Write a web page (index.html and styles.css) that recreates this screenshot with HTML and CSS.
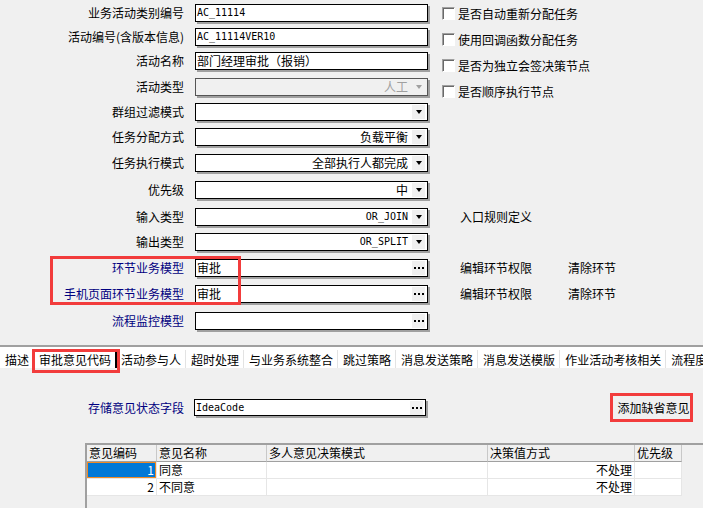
FILE: index.html
```html
<!DOCTYPE html>
<html lang="zh-CN">
<head>
    <meta charset="UTF-8">
    <title>活动属性</title>
    <link rel="stylesheet" href="styles.css">
</head>
<body>
    <!-- activity properties -->
    <div class="top">
        <div class="form">
            <div class="opts">
                <div class="chk"><span class="box"></span>是否自动重新分配任务</div>
                <div class="chk"><span class="box"></span>使用回调函数分配任务</div>
                <div class="chk"><span class="box"></span>是否为独立会签决策节点</div>
                <div class="chk"><span class="box"></span>是否顺序执行节点</div>
            </div>

            <div class="lbl">业务活动类别编号</div>
            <div class="fld mono">AC_11114</div>

            <div class="lbl">活动编号(含版本信息)</div>
            <div class="fld mono">AC_11114VER10</div>

            <div class="lbl">活动名称</div>
            <div class="fld">部门经理审批（报销）</div>

            <div class="lbl">活动类型</div>
            <div class="fld sel off"><span>人工</span><span class="dd"></span></div>

            <div class="lbl">群组过滤模式</div>
            <div class="fld sel"><span></span><span class="dd"></span></div>

            <div class="lbl">任务分配方式</div>
            <div class="fld sel"><span>负载平衡</span><span class="dd"></span></div>

            <div class="lbl">任务执行模式</div>
            <div class="fld sel"><span>全部执行人都完成</span><span class="dd"></span></div>

            <div class="lbl">优先级</div>
            <div class="fld sel"><span>中</span><span class="dd"></span></div>

            <div class="lbl">输入类型</div>
            <div class="fld sel"><span class="mono">OR_JOIN</span><span class="dd"></span></div>
            <div class="note">入口规则定义</div>

            <div class="lbl">输出类型</div>
            <div class="fld sel"><span class="mono">OR_SPLIT</span><span class="dd"></span></div>

            <div class="lbl link">环节业务模型</div>
            <div class="fld pick"><span>审批</span><span class="dots"></span></div>
            <div class="note"><span class="act">编辑环节权限</span><span>清除环节</span></div>

            <div class="lbl link">手机页面环节业务模型</div>
            <div class="fld pick"><span>审批</span><span class="dots"></span></div>
            <div class="note"><span class="act">编辑环节权限</span><span>清除环节</span></div>

            <div class="lbl link">流程监控模型</div>
            <div class="fld pick"><span></span><span class="dots"></span></div>
        </div>
        <div class="mark mark-model"></div>
    </div>

    <div class="tabbar">
        <div class="tabs">
            <span class="tab">描述</span>
            <span class="tab on">审批意见代码</span>
            <span class="tab">活动参与人</span>
            <span class="tab">超时处理</span>
            <span class="tab">与业务系统整合</span>
            <span class="tab">跳过策略</span>
            <span class="tab">消息发送策略</span>
            <span class="tab">消息发送模版</span>
            <span class="tab">作业活动考核相关</span>
            <span class="tab">流程度量</span>
        </div>
        <div class="mark mark-tab"></div>
    </div>

    <!-- approval opinion codes -->
    <div class="pane">
        <div class="pane-row">
            <div class="lbl link wide">存储意见状态字段</div>
            <div class="fld pick code"><span class="mono">IdeaCode</span><span class="dots"></span></div>
            <div class="btn">添加缺省意见</div>
        </div>

        <div class="grid">
            <div class="gr head">
                <div>意见编码</div>
                <div>意见名称</div>
                <div>多人意见决策模式</div>
                <div>决策值方式</div>
                <div>优先级</div>
            </div>
            <div class="gr">
                <div class="num cur">1</div>
                <div>同意</div>
                <div></div>
                <div class="num">不处理</div>
                <div></div>
            </div>
            <div class="gr">
                <div class="num">2</div>
                <div>不同意</div>
                <div></div>
                <div class="num">不处理</div>
                <div></div>
            </div>
        </div>
    </div>
</body>
</html>
```

FILE: styles.css
```css
body {
    margin: 0;
    width: 703px;
    height: 508px;
    overflow: hidden;
    background-color: #f0f0f0;
    color: #000;
    font-family: "Noto Sans CJK SC", sans-serif;
    font-size: 12px;
}
.mono {
    font-family: "DejaVu Sans Mono", monospace;
    font-size: 10px;
}
/* top form */
.top {
    position: relative;
    height: 345px;
    border-bottom: 2px solid #a0a0a0;
}
.form {
    display: grid;
    grid-template-columns: 195px 247px 1fr;
    grid-template-rows: 24px 24px 26px 25px 25px 26px 27px 27px 25px 26px 26px 27px 18px;
    padding-top: 4px;
}
.lbl {
    grid-column: 1;
    height: 18px;
    line-height: 18px;
    padding-right: 11px;
    text-align: right;
    white-space: nowrap;
}
.link {
    color: #000080;
}
.fld {
    grid-column: 2;
    box-sizing: border-box;
    width: 233px;
    height: 18px;
    border: 1px solid #000;
    background-color: #fff;
    box-shadow: 2px 2px 0 #a0a0a0;
    display: flex;
    align-items: center;
    padding-left: 1px;
    line-height: 16px;
    white-space: nowrap;
    overflow: hidden;
}
.sel {
    justify-content: flex-end;
    padding-left: 0;
}
.sel > span:first-child {
    padding-right: 4px;
}
.off {
    background-color: #f0f0f0;
    border-color: #555;
    color: #a0a0a0;
}
/* dropdown button */
.dd {
    width: 13px;
    height: 14px;
    margin-right: 2px;
    background-color: #f0f0f0;
    display: flex;
    align-items: center;
    justify-content: center;
}
.dd::after {
    content: "";
    border-top: 4px solid #000;
    border-left: 3px solid transparent;
    border-right: 3px solid transparent;
}
.off .dd::after {
    border-top-color: #a0a0a0;
}
/* ellipsis button */
.pick {
    justify-content: space-between;
}
.dots {
    position: relative;
    width: 13px;
    height: 14px;
    margin-right: 2px;
    background-color: #f0f0f0;
}
.dots::after {
    content: "";
    position: absolute;
    left: 2px;
    top: 6px;
    width: 2px;
    height: 2px;
    background-color: #000;
    box-shadow: 4px 0 #000, 8px 0 #000;
}
/* checkboxes */
.opts {
    grid-column: 3;
    grid-row: 1 / span 4;
    margin-top: -4px;
}
.chk {
    height: 26px;
    display: flex;
    align-items: center;
    white-space: nowrap;
}
.box {
    box-sizing: border-box;
    width: 13px;
    height: 13px;
    margin-right: 3px;
    background-color: #fff;
    border: 1px solid;
    border-color: #a0a0a0 #fff #fff #a0a0a0;
    box-shadow: inset 1px 1px 0 #696969;
}
.note {
    grid-column: 3;
    height: 18px;
    line-height: 18px;
    padding-left: 18px;
    display: flex;
    white-space: nowrap;
}
.act {
    width: 108px;
}
/* red annotation frames */
.mark {
    position: absolute;
    box-sizing: border-box;
    border: 3px solid #f23c3c;
    pointer-events: none;
}
.mark-model {
    left: 50px;
    top: 256px;
    width: 191px;
    height: 49px;
}
/* tab strip */
.tabbar {
    position: relative;
}
.tabs {
    height: 21px;
    background-color: #fff;
    display: flex;
    align-items: flex-start;
    overflow: hidden;
    white-space: nowrap;
}
.tab {
    flex: none;
    margin-top: 3px;
    height: 18px;
    padding: 2px 4px 0 5px;
    box-sizing: border-box;
    line-height: 16px;
    border-right: 1px solid #e3e3e3;
}
.tab.on {
    border-right: 2px solid #000;
    margin-right: -1px;
}
.mark-tab {
    left: 32px;
    top: 2px;
    width: 88px;
    height: 24px;
}
/* opinion pane */
.pane {
    padding-top: 25px;
}
.pane-row {
    display: flex;
    align-items: center;
    height: 29px;
}
.wide {
    width: 184px;
    box-sizing: border-box;
    padding-right: 0;
}
.code {
    margin-left: 10px;
    width: 232px;
    height: 17px;
}
.btn {
    margin-left: auto;
    margin-right: 10px;
    box-sizing: border-box;
    width: 83px;
    height: 29px;
    line-height: 23px;
    padding-left: 4px;
    text-align: center;
    border: 3px solid #f23c3c;
}
/* opinion grid */
.grid {
    margin-top: 21px;
    margin-left: 85px;
    height: 80px;
    border-top: 2px solid #a0a0a0;
    border-left: 2px solid #a0a0a0;
}
.gr {
    display: grid;
    grid-template-columns: 70px 110px 221px 147px 47px;
    width: 595px;
}
.gr > div {
    box-sizing: border-box;
    height: 17px;
    line-height: 16px;
    padding: 0 2px;
    background-color: #fff;
    border-right: 1px solid #e6e6e6;
    border-bottom: 1px solid #e6e6e6;
    white-space: nowrap;
    overflow: hidden;
}
.head > div {
    background-color: #f0f0f0;
    border-right: 1px solid #c8c8c8;
    border-bottom: 1px solid #a0a0a0;
}
.num {
    text-align: right;
}
.gr > .cur {
    background-color: #0078d7;
    color: #fff;
    box-shadow: inset 0 0 0 1px #f08a24;
}
```
